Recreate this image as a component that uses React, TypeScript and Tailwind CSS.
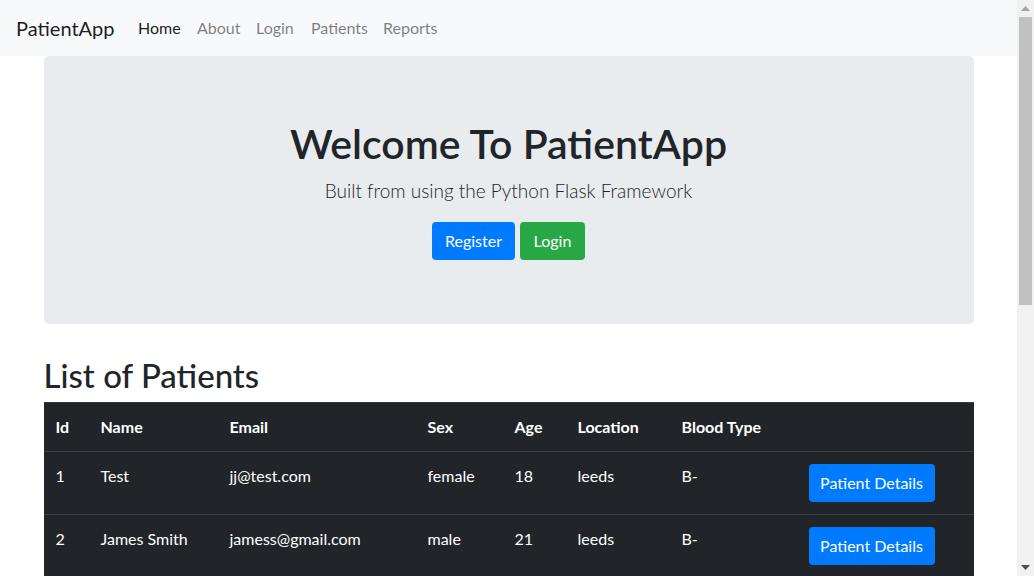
const patients = [
  { id: 1, name: "Test", email: "jj@test.com", sex: "female", age: 18, location: "leeds", blood: "B-" },
  { id: 2, name: "James Smith", email: "jamess@gmail.com", sex: "male", age: 21, location: "leeds", blood: "B-" },
];

function Scrollbar() {
  return (
    <div className="w-[17px] h-[576px] bg-[#f1f1f1] flex flex-col items-center shrink-0">
      <div className="h-[17px] w-full flex items-center justify-center">
        <svg width="9" height="5" viewBox="0 0 9 5">
          <polygon points="4.5,0 9,5 0,5" fill="#a3a3a3" />
        </svg>
      </div>
      <div className="w-[13px] h-[288px] bg-[#c1c1c1]" />
      <div className="flex-1" />
      <div className="h-[17px] w-full flex items-center justify-center">
        <svg width="9" height="5" viewBox="0 0 9 5">
          <polygon points="0,0 9,0 4.5,5" fill="#505050" />
        </svg>
      </div>
    </div>
  );
}

export default function App() {
  return (
    <div
      className="flex w-[1034px] h-[576px] overflow-hidden bg-white text-[#212529]"
      style={{ fontFamily: 'Lato, "Open Sans", sans-serif' }}
    >
      <div className="flex-1 min-w-0 h-[576px] overflow-hidden">
        <nav className="h-14 bg-[#f8f9fa] flex items-center pl-4">
          <span className="text-[20px] leading-[30px] text-black/90 w-[122px]">PatientApp</span>
          <div className="flex text-[16px] leading-6">
            <span className="w-[59px] text-black/90">Home</span>
            <span className="w-[59px] text-black/50">About</span>
            <span className="w-[55px] text-black/50">Login</span>
            <span className="w-[72px] text-black/50">Patients</span>
            <span className="text-black/50">Reports</span>
          </div>
        </nav>
        <div className="w-[930px] mx-auto">
          <div className="bg-[#e9ecef] rounded-[5px] px-8 py-16 text-center">
            <h1 className="text-[41px] font-semibold leading-[48px] mb-2">Welcome To PatientApp</h1>
            <p className="text-[19px] font-light leading-[30px] mb-4">Built from using the Python Flask Framework</p>
            <div className="flex justify-center gap-[5px]">
              <button className="h-[38px] w-[83px] rounded-[4px] bg-[#007bff] text-white text-[16px]">Register</button>
              <button className="h-[38px] w-[65px] rounded-[4px] bg-[#28a745] text-white text-[16px]">Login</button>
            </div>
          </div>
          <h2 className="mt-8 text-[33px] font-medium leading-[38px] mb-2">List of Patients</h2>
          <table className="w-[930px] table-fixed border-collapse bg-[#212529] text-white text-[16px] leading-6">
            <colgroup>
              <col className="w-[45px]" />
              <col className="w-[129px]" />
              <col className="w-[198px]" />
              <col className="w-[87px]" />
              <col className="w-[63px]" />
              <col className="w-[104px]" />
              <col className="w-[127px]" />
              <col />
            </colgroup>
            <thead>
              <tr className="border-t border-[#32383e]">
                {["Id", "Name", "Email", "Sex", "Age", "Location", "Blood Type", ""].map((h, i) => (
                  <th key={i} className="p-3 text-left font-bold align-top">
                    {h}
                  </th>
                ))}
              </tr>
            </thead>
            <tbody>
              {patients.map((p) => (
                <tr key={p.id} className="border-t border-[#3a4047]">
                  <td className="p-3 align-top">{p.id}</td>
                  <td className="p-3 align-top">{p.name}</td>
                  <td className="p-3 align-top">{p.email}</td>
                  <td className="p-3 align-top">{p.sex}</td>
                  <td className="p-3 align-top">{p.age}</td>
                  <td className="p-3 align-top">{p.location}</td>
                  <td className="p-3 align-top">{p.blood}</td>
                  <td className="p-3 align-top">
                    <button className="h-[38px] w-[126px] rounded-[4px] bg-[#007bff] text-white text-[16px]">
                      Patient Details
                    </button>
                  </td>
                </tr>
              ))}
            </tbody>
          </table>
        </div>
      </div>
      <Scrollbar />
    </div>
  );
}
